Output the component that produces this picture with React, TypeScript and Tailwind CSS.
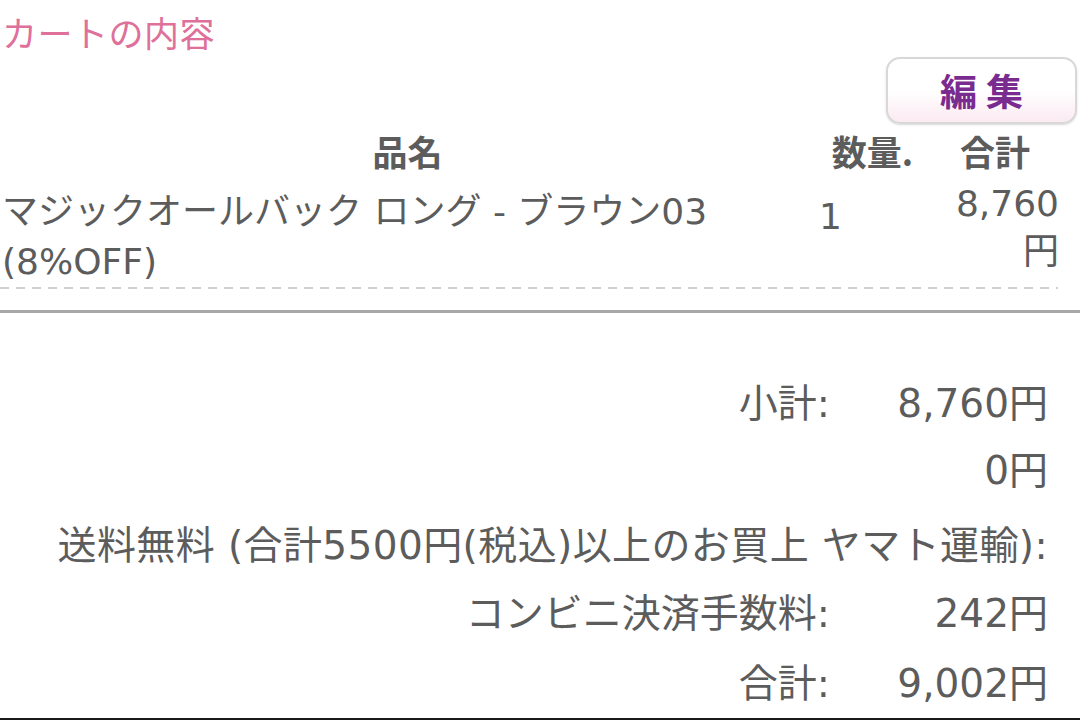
import React from "react";

const cjk = { fontFamily: '"Noto Sans CJK JP", "Noto Sans", sans-serif' };
const mixed = { fontFamily: '"DejaVu Sans", "Noto Sans CJK JP", sans-serif' };

export default function App() {
  return (
    <div className="w-[1080px] h-[720px] bg-white overflow-hidden relative text-[#5c5c5c]" style={cjk}>
      <div className="h-[57px] pl-[2px] pt-[8px] text-[35px] tracking-[0.5px] leading-[48px] text-[#de709a]">カートの内容</div>
      <div className="flex justify-end pr-[3px]">
        <button className="w-[191px] h-[67px] rounded-[14px] border-2 border-[#d8d8d8] bg-gradient-to-b from-white via-white to-[#fbeaf2] shadow-[0_1px_2px_rgba(0,0,0,0.15)] text-[37px] font-bold text-[#7a2b8f] tracking-[9px] pl-[9px] leading-none">
          編集
        </button>
      </div>
      <div className="grid grid-cols-[815px_115px_130px] text-[35px] font-bold leading-[40px] mt-[7px]">
        <div className="text-center">品名</div>
        <div className="text-center">数量.</div>
        <div className="text-center">合計</div>
      </div>
      <div className="grid grid-cols-[815px_115px_130px] text-[36px] leading-[50px] mt-[16px] w-[1058px]" style={mixed}>
        <div className="pl-[2px]">マジックオールバック ロング - ブラウン03<br />(8%OFF)</div>
        <div className="pl-[4px] pt-[5px]">1</div>
        <div className="text-right pr-[1px] -mt-[7px] leading-[48px]">8,760<br />円</div>
      </div>
      <div className="w-[1058px] h-[2px] bg-[repeating-linear-gradient(90deg,#d0d0d0_0px,#d0d0d0_9px,transparent_9px,transparent_16px)]" />
      <div className="mt-[21px] h-[3px] bg-[#a8a8a8]" />
      <div className="flex flex-col items-end pr-[32px] text-[39px] leading-[50px] mt-[66px]" style={mixed}>
        <div className="flex">
          <div className="text-right">小計:</div>
          <div className="w-[218px] text-right">8,760円</div>
        </div>
        <div className="flex mt-[17px]">
          <div className="w-[218px] text-right">0円</div>
        </div>
        <div className="flex mt-[25px]">
          <div className="text-right tracking-[0.4px]">送料無料 (合計5500円(税込)以上のお買上 ヤマト運輸):</div>
        </div>
        <div className="flex mt-[18px]">
          <div className="text-right">コンビニ決済手数料:</div>
          <div className="w-[218px] text-right">242円</div>
        </div>
        <div className="flex mt-[20px]">
          <div className="text-right">合計:</div>
          <div className="w-[218px] text-right">9,002円</div>
        </div>
      </div>
      <div className="absolute left-0 right-0 bottom-0 h-[2px] bg-[#1a1a1a]" />
    </div>
  );
}
